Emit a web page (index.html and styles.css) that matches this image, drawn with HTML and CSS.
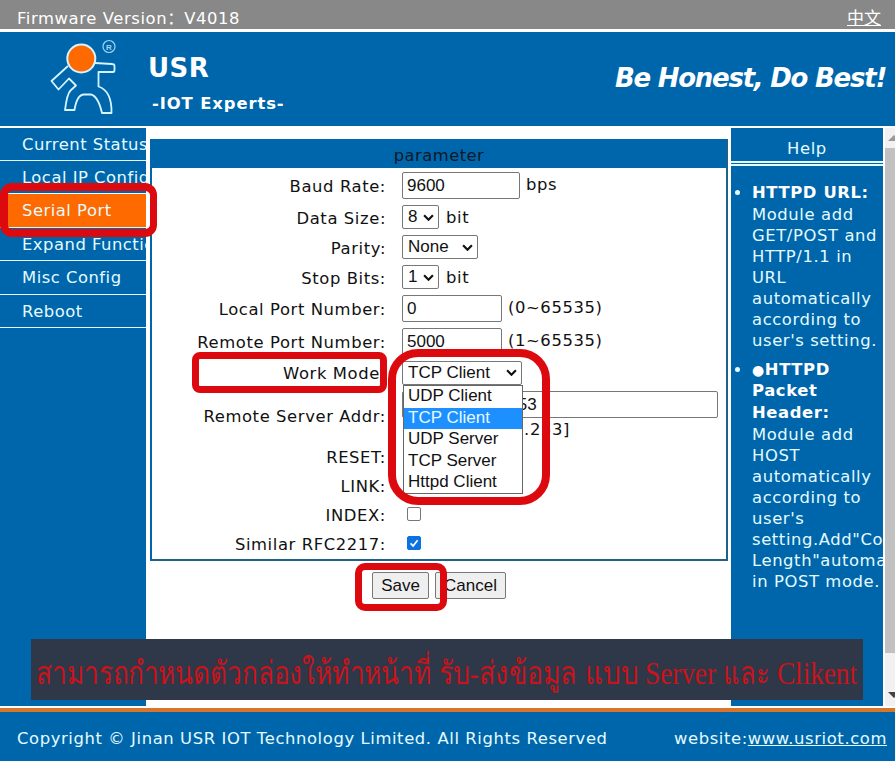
FILE: index.html
```html
<!DOCTYPE html>
<html lang="en">
<head>
<meta charset="utf-8">
<title>USR IOT</title>
<link rel="stylesheet" href="styles.css">
</head>
<body>
<div class="page">
  <div class="topbar"><span class="fw">Firmware Version：V4018</span><a class="lang">中文</a></div>
  <header class="header">
    <svg class="logo" width="80" height="84" viewBox="45 36 80 84" fill="none" stroke="#d5f4ff" stroke-width="1.8" stroke-linejoin="round">
      <path d="M68 66 L51.500 81 L58.500 89.500 L69 78.500 L76 85.500 L70.500 90.500 Q67 94 65 110 L74.500 110 Q77 94.500 84 94.500 H91 Q98 96 102 113 L111.500 113 Q112 91 98.500 86.500 V72 L113 72 Q114.500 72 114.500 70 V66 Q114.500 64 112 64 L95 63"/>
      <circle cx="81.300" cy="58.500" r="14" fill="#ff6a00" stroke-width="2"/>
      <circle cx="109" cy="46.500" r="6" stroke="#9fd5f2" stroke-width="1.200"/>
      <text class="reg" x="109" y="49.500" text-anchor="middle">R</text>
    </svg>
    <div class="brand"><div class="name">USR</div><div class="tag">-IOT Experts-</div></div>
    <div class="slogan">Be Honest, Do Best!</div>
  </header>
  <div class="main">
    <nav class="nav">
      <a>Current Status</a><a>Local IP Config</a><a class="on">Serial Port</a><a>Expand Function</a><a>Misc Config</a><a>Reboot</a>
    </nav>
    <div class="center">
      <div class="panel">
        <div class="title">parameter</div>
        <div class="form">
          <label>Baud Rate:</label><div><span class="box w118">9600</span><span class="unit up">bps</span></div>
          <label>Data Size:</label><div><span class="box sel w37">8<svg class="chev" viewBox="0 0 10 6"><path d="M1 1l4 4 4-4"/></svg></span><span class="unit">bit</span></div>
          <label>Parity:</label><div><span class="box sel w76">None<svg class="chev" viewBox="0 0 10 6"><path d="M1 1l4 4 4-4"/></svg></span></div>
          <label>Stop Bits:</label><div><span class="box sel w37">1<svg class="chev" viewBox="0 0 10 6"><path d="M1 1l4 4 4-4"/></svg></span><span class="unit">bit</span></div>
          <label>Local Port Number:</label><div><span class="box w100">0</span><span class="unit up">(0~65535)</span></div>
          <label>Remote Port Number:</label><div><span class="box w100">5000</span><span class="unit up">(1~65535)</span></div>
          <label>Work Mode:</label><div><span class="box sel w120">TCP Client<svg class="chev" viewBox="0 0 10 6"><path d="M1 1l4 4 4-4"/></svg></span></div>
          <label>Remote Server Addr:</label><div class="addr"><span class="box w316">192.168.200.253</span><span class="hint">[192.168.0.253]</span></div>
          <label>RESET:</label><div></div>
          <label>LINK:</label><div></div>
          <label>INDEX:</label><div><span class="check"></span></div>
          <label>Similar RFC2217:</label><div><span class="check checked"><svg viewBox="0 0 14 14"><path d="M3 7.500l3 3L11.200 3.800"/></svg></span></div>
        </div>
      </div>
      <div class="actions"><button>Save</button><button class="cancel">Cancel</button></div>
    </div>
    <aside class="help">
      <div class="helptitle">Help</div>
      <div class="helprule"></div>
      <ul>
        <li><b>HTTPD URL:</b>Module add<br>GET/POST and<br>HTTP/1.1 in<br>URL<br>automatically<br>according to<br>user's setting.</li>
        <li><b><span class="dot">●</span>HTTPD<br>Packet<br>Header:</b>Module add<br>HOST<br>automatically<br>according to<br>user's<br>setting.Add"Content-<br>Length"automatically<br>in POST mode.</li>
      </ul>
    </aside>
    <div class="scroll"><svg width="10" height="18"><path d="M3 13L9 7l6 6z" fill="#999"/></svg><div class="thumb"></div><svg width="10" height="18"><path d="M3 5l6 6 6-6z" fill="#444"/></svg></div>
  </div>
  <footer class="footer"><span class="copy">Copyright © Jinan USR IOT Technology Limited. All Rights Reserved</span><span class="site">website:<a>www.usriot.com</a></span></footer>

  <div class="options"><div>UDP Client</div><div class="hl">TCP Client</div><div>UDP Server</div><div>TCP Server</div><div>Httpd Client</div></div>
  <div class="mark m-serial"></div>
  <div class="mark m-mode"></div>
  <div class="mark m-list"></div>
  <div class="mark m-save"></div>
  <div class="banner"><svg width="832" height="61" viewBox="31 639 832 61"><text x="36" y="684" textLength="395" lengthAdjust="spacingAndGlyphs">สามารถกำหนดตัวกล่องให้ทำหน้าที่</text><text x="439" y="684" textLength="138" lengthAdjust="spacingAndGlyphs">รับ-ส่งข้อมูล</text><text x="585" y="684" textLength="53" lengthAdjust="spacingAndGlyphs">แบบ</text><text x="645" y="684" textLength="71" lengthAdjust="spacingAndGlyphs">Server</text><text x="723" y="684" textLength="46" lengthAdjust="spacingAndGlyphs">และ</text><text x="777" y="684" textLength="80" lengthAdjust="spacingAndGlyphs">Clikent</text></svg></div>
</div>
</body>
</html>
```
FILE: styles.css
```css
* { box-sizing: border-box; }
body { margin: 0; }
.page { position: relative; width: 895px; height: 761px; overflow: hidden; background: #fff; font: 16.4px/21px "DejaVu Sans", "Noto Sans CJK SC", sans-serif; letter-spacing: 0.6px; color: #111; }
.topbar { height: 29px; background: #888; color: #fff; display: flex; justify-content: space-between; padding: 8px 14px 0 17px; }
.lang { text-decoration: underline; font-size: 17px; letter-spacing: 0; }
.header { height: 94px; margin-top: 3px; background: #0066ab; color: #fff; display: flex; }
.logo { margin: 4px 0 0 45px; }
.reg { font: bold 8px "Liberation Sans", sans-serif; fill: #9fd5f2; stroke: none; letter-spacing: 0; }
.brand { padding: 21px 0 0 23px; font-weight: bold; flex: 1; white-space: nowrap; letter-spacing: 0.5px; }
.name { font-size: 26px; line-height: 30px; }
.tag { font-size: 16.4px; letter-spacing: 0.9px; padding: 10px 0 0 4px; }
.slogan { font: italic bold 26px/30px "DejaVu Sans", sans-serif; letter-spacing: -1.25px; padding: 31px 9px 0 0; white-space: nowrap; }
.main { display: flex; height: 578px; margin-top: 2px; }
.nav { width: 146px; background: #0066ab; color: #e4fbff; overflow: hidden; display: flex; flex-direction: column; letter-spacing: 0.5px; }
.nav a { height: 33.4px; flex: none; line-height: 33px; padding-left: 22px; border-bottom: 1px solid #e4fbff; white-space: nowrap; }
.nav a:first-child { height: 33px; }
.nav .on { background: #ff6a00; }
.center { width: 585px; padding: 11px 3px 0 4px; }
.panel { height: 422px; border: 2px solid #0066ab; border-right-color: #1d628f; border-bottom-color: #1d628f; }
.title { height: 27px; background: #0066ab; color: #111827; text-align: center; line-height: 29px; letter-spacing: 0.45px; }
.form { display: grid; grid-template-columns: 234px 1fr; column-gap: 16px; grid-template-rows: 34px 30px 30px 30px 33px 32px 31px 54px 29px 29px 29px 29px; }
.form > * { display: flex; align-items: center; }
.form label { justify-content: flex-end; white-space: nowrap; padding-top: 2px; }
.box { height: 27px; border: 1px solid #777; border-radius: 2px; font: 17px/25px "Liberation Sans", sans-serif; letter-spacing: 0; padding-left: 4px; background: #fff; }
.sel { height: 24px; line-height: 22px; padding: 0 4px 0 5px; display: flex; justify-content: space-between; align-items: center; }
.chev { width: 11px; height: 7px; fill: none; stroke: #111; stroke-width: 2; }
.w118 { width: 118px; }
.w37 { width: 37px; }
.w76 { width: 76px; }
.w100 { width: 100px; }
.w120 { width: 120px; }
.w316 { width: 316px; padding-left: 6px; }
.unit { margin-left: 7px; }
.up { padding-bottom: 2px; margin-left: 6px; }
.form .addr { flex-direction: column; align-items: flex-start; padding-top: 3px; }
.hint { width: 168px; text-align: right; padding-top: 1px; }
.check { width: 14px; height: 14px; margin: -2px 0 0 5px; border: 1px solid #777; border-radius: 2px; }
.checked { background: #0b72e0; border-color: #0b72e0; }
.check svg { display: block; width: 12px; height: 12px; fill: none; stroke: #fff; stroke-width: 2; }
.actions { display: flex; padding: 11px 0 0 222px; gap: 6px; }
.actions button { width: 57px; height: 27px; border: 1px solid #777; border-radius: 2px; background: #efefef; font: 17px/23px "Liberation Sans", sans-serif; letter-spacing: 0; padding: 0; color: #111; }
.actions .cancel { width: 71px; }
.help { width: 152px; background: #0066ab; color: #e4fbff; overflow: hidden; }
.helptitle { height: 33px; line-height: 41px; text-align: center; }
.helprule { height: 5px; border: solid #e4fbff; border-width: 2px 0; }
.help ul { margin: 16px 0 0; padding-left: 21px; white-space: nowrap; }
.help li { margin-bottom: 8px; }
.help b { display: block; line-height: 21.7px; color: #fff; }
.dot { font-size: 14px; line-height: 1; }
.scroll { width: 10px; margin-left: 2px; background: #f1f1f1; display: flex; flex-direction: column; }
.thumb { height: 505px; margin: 2px 0 34px; background: #c1c1c1; }
.footer { margin-top: 2px; height: 53px; border-top: 4px solid #d9742b; background: #0066ab; color: #e4fbff; display: flex; justify-content: space-between; align-items: center; padding: 4px 8px 0 17px; white-space: nowrap; }
.site a { text-decoration: underline; }
.options { position: absolute; left: 403px; top: 385px; width: 120px; height: 109px; border: 1px solid #666; background: #fff; font: 17px/19.5px "Liberation Sans", sans-serif; letter-spacing: 0; }
.options div { padding-left: 4px; height: 21.5px; }
.options .hl { background: #1e8fff; color: #e4fbff; }
.mark { position: absolute; border: 7px solid #dc0a0f; }
.m-serial { left: 0; top: 183px; width: 157px; height: 54px; border-width: 8px 7px 8px 8px; border-radius: 12px; }
.m-mode { left: 192px; top: 352px; width: 195px; height: 41px; border-radius: 8px; }
.m-list { left: 388px; top: 349px; width: 162px; height: 156px; border-width: 8px; border-radius: 30px; }
.m-save { left: 355px; top: 563px; width: 92px; height: 48px; border-radius: 10px; }
.banner { position: absolute; left: 31px; top: 639px; width: 832px; height: 61px; background: #2e3849; }
.banner svg { display: block; }
.banner text { font: 32px "Liberation Serif", serif; letter-spacing: 0; fill: #c9131b; }
```
